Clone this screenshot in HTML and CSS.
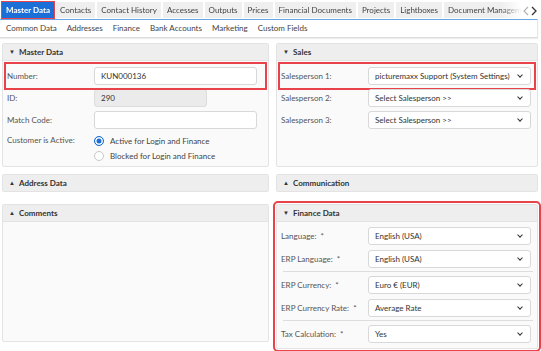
FILE: index.html
```html
<!DOCTYPE html>
<html lang="en">
  <head>
    <meta charset="UTF-8" />
    <title>Customer - Master Data</title>
    <link rel="stylesheet" href="styles.css">
  </head>
  <body>
    <div class="tabbar">
      <div class="tablist">
        <div class="tab active">Master Data</div>
        <div class="tab">Contacts</div>
        <div class="tab">Contact History</div>
        <div class="tab">Accesses</div>
        <div class="tab">Outputs</div>
        <div class="tab">Prices</div>
        <div class="tab">Financial Documents</div>
        <div class="tab">Projects</div>
        <div class="tab">Lightboxes</div>
        <div class="tab">Document Management</div>
      </div>
      <div class="arrow light">
        <svg width="6" height="10" viewBox="0 0 6 10"><path d="M5 1 L1 5 L5 9" fill="none" stroke="currentColor" stroke-width="1.1" /></svg>
      </div>
      <div class="arrow">
        <svg width="6" height="10" viewBox="0 0 6 10"><path d="M1 1 L5 5 L1 9" fill="none" stroke="currentColor" stroke-width="1.3" /></svg>
      </div>
    </div>

    <div class="subtabs">
      <span>Common Data</span>
      <span>Addresses</span>
      <span>Finance</span>
      <span>Bank Accounts</span>
      <span>Marketing</span>
      <span>Custom Fields</span>
    </div>

    <div class="content">
      <div class="panel">
        <div class="panel-head"><span class="caret">&#9660;</span>Master Data</div>
        <div class="panel-body">
          <div class="row marked">
            <label>Number:</label>
            <div class="input">KUN000136</div>
          </div>
          <div class="row">
            <label>ID:</label>
            <div class="input disabled">290</div>
          </div>
          <div class="row">
            <label>Match Code:</label>
            <div class="input"></div>
          </div>
          <div class="row radios">
            <label>Customer is Active:</label>
            <div>
              <div class="radio"><span class="dot checked"></span>Active for Login and Finance</div>
              <div class="radio"><span class="dot"></span>Blocked for Login and Finance</div>
            </div>
          </div>
        </div>
      </div>

      <div class="panel">
        <div class="panel-head"><span class="caret">&#9660;</span>Sales</div>
        <div class="panel-body">
          <div class="row marked">
            <label>Salesperson 1:</label>
            <div class="select">picturemaxx Support (System Settings)</div>
          </div>
          <div class="row">
            <label>Salesperson 2:</label>
            <div class="select">Select Salesperson &gt;&gt;</div>
          </div>
          <div class="row">
            <label>Salesperson 3:</label>
            <div class="select">Select Salesperson &gt;&gt;</div>
          </div>
        </div>
      </div>

      <div class="panel collapsed">
        <div class="panel-head"><span class="caret">&#9650;</span>Address Data</div>
      </div>

      <div class="panel collapsed">
        <div class="panel-head"><span class="caret">&#9650;</span>Communication</div>
      </div>

      <div class="panel">
        <div class="panel-head"><span class="caret">&#9650;</span>Comments</div>
        <div class="panel-body"></div>
      </div>

      <div class="panel marked-panel">
        <div class="panel-head"><span class="caret">&#9660;</span>Finance Data</div>
        <div class="panel-body finance">
          <div class="row">
            <label>Language: <i>*</i></label>
            <div class="select">English (USA)</div>
          </div>
          <div class="row">
            <label>ERP Language: <i>*</i></label>
            <div class="select">English (USA)</div>
          </div>
          <hr />
          <div class="row">
            <label>ERP Currency: <i>*</i></label>
            <div class="select">Euro &euro; (EUR)</div>
          </div>
          <div class="row">
            <label>ERP Currency Rate: <i>*</i></label>
            <div class="select">Average Rate</div>
          </div>
          <hr />
          <div class="row">
            <label>Tax Calculation: <i>*</i></label>
            <div class="select">Yes</div>
          </div>
        </div>
      </div>
    </div>
  </body>
</html>
```

FILE: styles.css
```css
body {
  margin: 0;
  background-color: #ffffff;
  font-family: 'Lato', 'Liberation Sans', sans-serif;
  font-size: 8px;
  color: #555555;
  width: 541px;
  height: 351px;
  overflow: hidden;
}

/* top tabs */
.tabbar {
  display: flex;
  height: 19px;
  padding-left: 2px;
  padding-right: 3px;
}

.tablist {
  display: flex;
  flex: 1;
  overflow: hidden;
  padding-top: 2px;
  padding-left: 1px;
  margin-left: -1px;
  -webkit-mask-image: linear-gradient(to right, #000 96%, transparent);
  mask-image: linear-gradient(to right, #000 96%, transparent);
}

.tab {
  flex-shrink: 0;
  height: 16px;
  line-height: 16px;
  padding: 0 4px;
  margin-right: 2px;
  background-color: #efefef;
  color: #444444;
  white-space: nowrap;
}

.tab.active {
  background-color: #1d6fd8;
  color: #ffffff;
  font-weight: 700;
  outline: 1.5px solid #e8424a;
  outline-offset: 0.5px;
}

.arrow {
  display: flex;
  align-items: center;
  justify-content: center;
  width: 8px;
  padding-top: 2px;
  background-color: #ffffff;
  color: #333333;
}

.arrow.light {
  color: #b0b0b0;
}

/* sub tabs */
.subtabs {
  display: flex;
  gap: 10px;
  height: 17px;
  line-height: 16px;
  margin-right: 3px;
  padding-left: 6px;
  border-top: 1px solid #6aa6e6;
  border-bottom: 1px solid #dddddd;
  border-right: 1px solid #e6e6e6;
  box-shadow: 0 1px 1px #eeeeee;
  color: #444444;
}

/* panels */
.content {
  display: grid;
  grid-template-columns: 267px 262px;
  grid-template-rows: auto auto 1fr;
  column-gap: 7px;
  height: 306px;
  padding: 5px 0 0 2px;
}

.panel {
  border: 1px solid #e3e3e3;
  border-radius: 2px;
  background-color: #fafafa;
  margin-bottom: 7px;
}

.panel.collapsed {
  margin-bottom: 12px;
  background-color: #eeeeee;
}

.panel-head {
  height: 16px;
  line-height: 16px;
  padding-left: 6px;
  background-color: #eeeeee;
  border-bottom: 1px solid #e3e3e3;
  font-weight: 700;
  color: #333333;
}

.panel.collapsed .panel-head {
  border-bottom: none;
}

.caret {
  display: inline-block;
  width: 10px;
  font-size: 6px;
  vertical-align: 1px;
}

.panel-body {
  padding: 4px 4px 3px 4px;
}

.panel-body.finance {
  padding: 2px 4px 0 4px;
}

.finance .row {
  height: 23px;
}

.marked-panel {
  margin-bottom: 0;
  outline: 2px solid #e8424a;
  outline-offset: 1px;
}

.row {
  display: grid;
  grid-template-columns: 87px 163px;
  align-items: center;
  height: 22px;
}

.row.marked {
  outline: 2px solid #e8424a;
  outline-offset: 1px;
}

label i {
  font-style: normal;
  margin-left: 2px;
}

.input,
.select {
  height: 16px;
  line-height: 16px;
  padding: 0 6px;
  background-color: #ffffff;
  border: 1px solid #d8d8d8;
  border-radius: 3px;
  color: #333333;
  white-space: nowrap;
  overflow: hidden;
}

.input.disabled {
  width: 99px;
  background-color: #ebebeb;
  border-color: #dddddd;
}

.select {
  position: relative;
  padding-right: 18px;
}

.select::after {
  content: '';
  position: absolute;
  right: 8px;
  top: 5px;
  width: 3px;
  height: 3px;
  border-right: 1.2px solid #333333;
  border-bottom: 1.2px solid #333333;
  transform: rotate(45deg);
}

.row.radios {
  height: auto;
  align-items: start;
  padding-top: 2px;
}

.row.radios label {
  line-height: 15px;
}

.radio {
  display: flex;
  align-items: center;
  height: 15px;
  color: #444444;
}

.dot {
  box-sizing: border-box;
  width: 10px;
  height: 10px;
  margin-right: 6px;
  border: 1px solid #c8c8c8;
  border-radius: 50%;
  background-color: #ffffff;
}

.dot.checked {
  border: 1.5px solid #1d6fd8;
  box-shadow: inset 0 0 0 1.5px #ffffff;
  background-color: #1d6fd8;
}

hr {
  border: none;
  border-top: 1px solid #dddddd;
  margin: 1px 0 1px 2px;
}
```
